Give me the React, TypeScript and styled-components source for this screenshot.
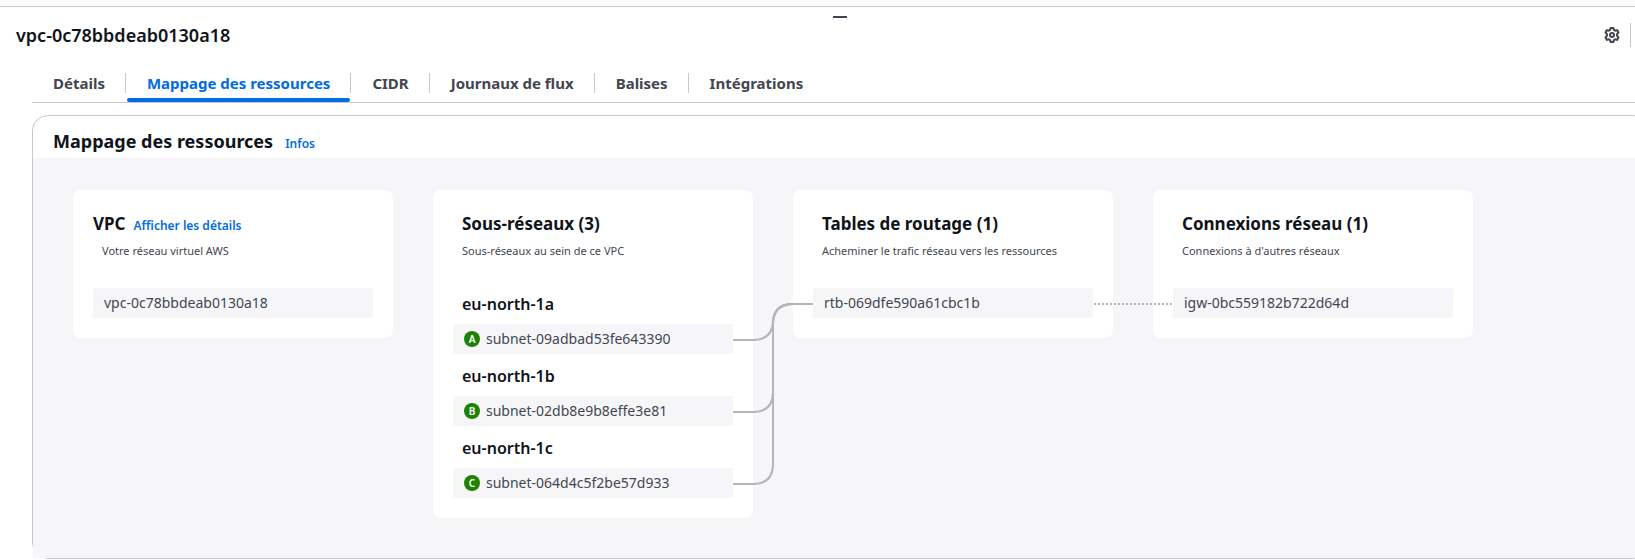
import React, { useState } from "react";
import styled, { createGlobalStyle } from "styled-components";

const color = {
  text: "#0f141a",
  body: "#424650",
  link: "#006ce0",
  border: "#c6c6cd",
  surface: "#f6f6f9",
  connector: "#b4b4bb",
  green: "#1d8102",
};

const GlobalStyle = createGlobalStyle`
  *, *::before, *::after { box-sizing: border-box; }
  body {
    margin: 0;
    background: #fff;
    color: ${color.body};
    font-family: "Noto Sans", "Open Sans", sans-serif;
    font-size: 14px;
    line-height: 20px;
  }
  h1, h2, h3, h4, p, ul { margin: 0; padding: 0; }
  ul { list-style: none; }
`;

const SplitPanel = styled.main`
  border-top: 6px solid #fcfcfd;
  overflow: hidden;
`;

const ResizeEdge = styled.div`
  display: flex;
  justify-content: center;
  padding-top: 9px;
  border-top: 1px solid ${color.border};
`;

const ResizeHandle = styled.button`
  width: 14px;
  height: 2px;
  padding: 0;
  margin-left: 45px;
  border: 0;
  background: ${color.body};
  cursor: row-resize;
`;

const PanelHeader = styled.header`
  display: flex;
  align-items: center;
  justify-content: space-between;
  height: 34px;
  margin-bottom: 11px;
  padding: 0 4px 0 16px;
`;

const PanelTitle = styled.h1`
  color: ${color.text};
  font-size: 18px;
  font-weight: 600;
  line-height: 24px;
`;

const PanelActions = styled.div`
  display: flex;
  height: 24px;
  align-items: center;
  padding-right: 10px;
  border-right: 1px solid ${color.border};
`;

const IconButton = styled.button`
  display: flex;
  padding: 0;
  border: 0;
  background: none;
  color: ${color.body};
  cursor: pointer;
`;

const PanelBody = styled.div`
  padding-left: 32px;
`;

const TabList = styled.div`
  display: flex;
  border-bottom: 1px solid ${color.border};
`;

const TabItem = styled.div`
  display: flex;
  padding-left: 1px;

  &:not(:last-child) {
    background: linear-gradient(${color.border}, ${color.border}) right 10px / 1px 20px no-repeat;
    padding-right: 1px;
  }
`;

const Tab = styled.button<{ $active: boolean }>`
  position: relative;
  height: 39px;
  padding: 10px 20px 9px;
  border: 0;
  background: none;
  color: ${(p) => (p.$active ? color.link : color.body)};
  font: 700 15px/20px "Noto Sans", sans-serif;
  cursor: pointer;

  &::after {
    content: "";
    position: absolute;
    inset: auto 0 0;
    height: 4px;
    border-radius: 2px;
    background: ${(p) => (p.$active ? color.link : "transparent")};
  }
`;

const Container = styled.section`
  margin: 12px -14px 0 0;
  border: 1px solid ${color.border};
  border-radius: 16px;
`;

const ContainerHeader = styled.div`
  display: flex;
  align-items: baseline;
  gap: 12px;
  padding: 13px 20px 5px;
`;

const ContainerTitle = styled.h2`
  color: ${color.text};
  font-size: 18px;
  font-weight: 700;
  line-height: 24px;
`;

const Link = styled.a`
  color: ${color.link};
  font-size: 12px;
  font-weight: 600;
  line-height: 16px;
  text-decoration: none;
`;

const ResourceMap = styled.div`
  position: relative;
  display: flex;
  align-items: flex-start;
  gap: 40px;
  padding: 32px 40px 40px;
  background: ${color.surface};
`;

const Card = styled.article`
  flex: 0 0 320px;
  padding: 20px;
  border-radius: 8px;
  background: #fff;
`;

const CardHeading = styled.div<{ $flush?: boolean }>`
  display: flex;
  align-items: baseline;
  gap: 8px;
  padding-left: ${(p) => (p.$flush ? 0 : 9)}px;
`;

const CardTitle = styled.h3`
  color: ${color.text};
  font-size: 17px;
  font-weight: 700;
  line-height: 28px;
`;

const CardText = styled.p`
  margin: 5px 0 29px;
  padding-left: 9px;
  font-size: 11px;
  line-height: 16px;
`;

const ZoneList = styled.ul`
  display: grid;
  gap: 6px;
`;

const ZoneTitle = styled.h4`
  padding: 0 0 4px 9px;
  color: ${color.text};
  font-size: 16px;
  font-weight: 600;
  line-height: 32px;
`;

const Resource = styled.div`
  display: flex;
  align-items: center;
  gap: 6px;
  height: 30px;
  padding: 0 11px;
  border-radius: 2px;
  background: ${color.surface};
`;

const ZoneBadge = styled.span`
  display: grid;
  place-items: center;
  width: 16px;
  height: 16px;
  border-radius: 50%;
  background: ${color.green};
  color: #fff;
  font-size: 10px;
  font-weight: 600;
  line-height: 16px;
`;

const Connectors = styled.svg`
  position: absolute;
  top: 0;
  left: 0;
  pointer-events: none;
`;

const tabs = ["Détails", "Mappage des ressources", "CIDR", "Journaux de flux", "Balises", "Intégrations"];

const zones = [
  { name: "eu-north-1a", badge: "A", subnet: "subnet-09adbad53fe643390" },
  { name: "eu-north-1b", badge: "B", subnet: "subnet-02db8e9b8effe3e81" },
  { name: "eu-north-1c", badge: "C", subnet: "subnet-064d4c5f2be57d933" },
];

function GearIcon() {
  return (
    <svg width="16" height="16" viewBox="0 0 16 16" fill="none" stroke="currentColor" strokeWidth="2" strokeLinejoin="round" aria-hidden="true">
      <path d="M6.600 1h2.800l.5 1.900 1.300.8 1.900-.6 1.400 2.400L13.100 7v2l1.400 1.500-1.400 2.400-1.900-.6-1.300.8-.5 1.900H6.600l-.5-1.900-1.300-.8-1.900.6-1.400-2.400L2.900 9V7L1.500 5.500l1.400-2.400 1.900.6 1.300-.8z" />
      <circle cx="8" cy="8" r="2" />
    </svg>
  );
}

/* Lines from each subnet to the route table, then on to the gateway. */
function MapConnectors() {
  return (
    <Connectors width="1180" height="340" fill="none" stroke={color.connector} strokeWidth="2" aria-hidden="true">
      {[182, 254, 326].map((y) => (
        <path key={y} d={`M700 ${y}h20q20 0 20-20V166q0-20 20-20h20`} />
      ))}
      <path d="M1061 146h79" strokeDasharray="2 2" />
    </Connectors>
  );
}

export default function App() {
  const [active, setActive] = useState(tabs[1]);

  return (
    <>
      <GlobalStyle />
      <SplitPanel>
        <ResizeEdge>
          <ResizeHandle aria-label="Redimensionner le panneau" />
        </ResizeEdge>
        <PanelHeader>
          <PanelTitle>vpc-0c78bbdeab0130a18</PanelTitle>
          <PanelActions>
            <IconButton aria-label="Préférences">
              <GearIcon />
            </IconButton>
          </PanelActions>
        </PanelHeader>
        <PanelBody>
          <TabList role="tablist">
            {tabs.map((tab) => (
              <TabItem key={tab} role="presentation">
                <Tab role="tab" aria-selected={tab === active} $active={tab === active} onClick={() => setActive(tab)}>
                  {tab}
                </Tab>
              </TabItem>
            ))}
          </TabList>
          <Container>
            <ContainerHeader>
              <ContainerTitle>Mappage des ressources</ContainerTitle>
              <Link href="#infos">Infos</Link>
            </ContainerHeader>
            <ResourceMap>
              <Card>
                <CardHeading $flush>
                  <CardTitle>VPC</CardTitle>
                  <Link href="#details">Afficher les détails</Link>
                </CardHeading>
                <CardText>Votre réseau virtuel AWS</CardText>
                <Resource>vpc-0c78bbdeab0130a18</Resource>
              </Card>
              <Card>
                <CardHeading>
                  <CardTitle>Sous-réseaux (3)</CardTitle>
                </CardHeading>
                <CardText>Sous-réseaux au sein de ce VPC</CardText>
                <ZoneList>
                  {zones.map((zone) => (
                    <li key={zone.name}>
                      <ZoneTitle>{zone.name}</ZoneTitle>
                      <Resource>
                        <ZoneBadge>{zone.badge}</ZoneBadge>
                        {zone.subnet}
                      </Resource>
                    </li>
                  ))}
                </ZoneList>
              </Card>
              <Card>
                <CardHeading>
                  <CardTitle>Tables de routage (1)</CardTitle>
                </CardHeading>
                <CardText>Acheminer le trafic réseau vers les ressources</CardText>
                <Resource>rtb-069dfe590a61cbc1b</Resource>
              </Card>
              <Card>
                <CardHeading>
                  <CardTitle>Connexions réseau (1)</CardTitle>
                </CardHeading>
                <CardText>Connexions à d'autres réseaux</CardText>
                <Resource>igw-0bc559182b722d64d</Resource>
              </Card>
              <MapConnectors />
            </ResourceMap>
          </Container>
        </PanelBody>
      </SplitPanel>
    </>
  );
}
